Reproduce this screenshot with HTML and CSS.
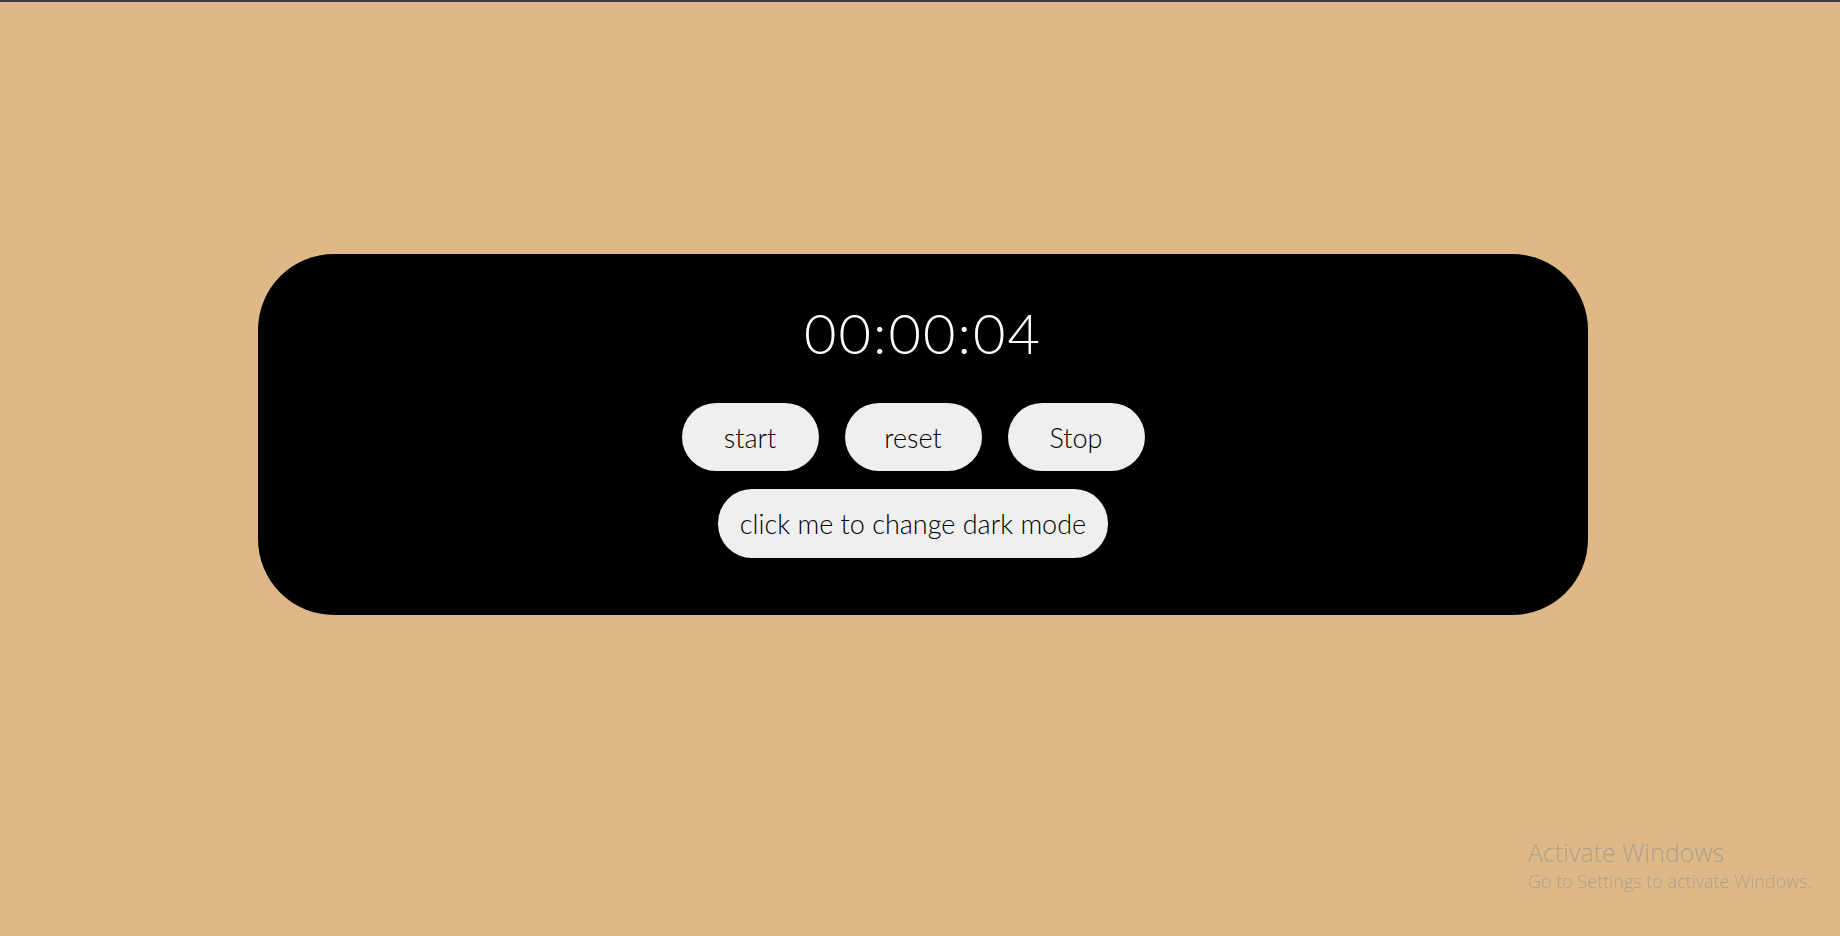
FILE: index.html
```html
<!DOCTYPE html>
<html lang="en">
<head>
<meta charset="utf-8">
<title>Stopwatch</title>
<link rel="stylesheet" href="styles.css">
</head>
<body>
<main class="card">
  <div class="time">00:00:04</div>
  <div class="row">
    <button class="btn">start</button>
    <button class="btn">reset</button>
    <button class="btn">Stop</button>
  </div>
  <div class="row">
    <button class="btn btn-wide">click me to change dark mode</button>
  </div>
</main>
<div class="watermark">
  <div class="wm-title">Activate Windows</div>
  <div class="wm-sub">Go to Settings to activate Windows.</div>
</div>
</body>
</html>
```
FILE: styles.css
```css
html, body {
  margin: 0;
  padding: 0;
}
body {
  height: 936px;
  box-sizing: border-box;
  background: #deb887;
  border-top: 2px solid #3d3d3d;
  font-family: "Lato", "Open Sans", sans-serif;
  font-weight: 300;
  overflow: hidden;
}
.card {
  width: 1330px;
  height: 361px;
  margin: 252px 0 0 258px;
  background: #000;
  border-radius: 76px;
  display: flex;
  flex-direction: column;
  align-items: center;
  box-sizing: border-box;
  padding-top: 44px;
}
.time {
  color: #fff;
  font-size: 56px;
  line-height: 70px;
  letter-spacing: 2px;
  margin-bottom: 35px;
}
.row {
  display: flex;
  gap: 26px;
  padding-right: 20px;
  margin-bottom: 18px;
}
.btn {
  font-family: inherit;
  font-weight: 300;
  font-size: 27px;
  color: #000;
  background: #efefef;
  border: none;
  border-radius: 34px;
  width: 137px;
  height: 68px;
  padding: 0;
}
.btn-wide {
  width: 390px;
  height: 69px;
}
.watermark {
  position: fixed;
  left: 1528px;
  top: 836px;
  color: #a9a08d;
  font-family: "Open Sans", "Noto Sans", sans-serif;
}
.wm-title {
  font-size: 25px;
  line-height: 32px;
}
.wm-sub {
  font-size: 18px;
  line-height: 26px;
}
```
